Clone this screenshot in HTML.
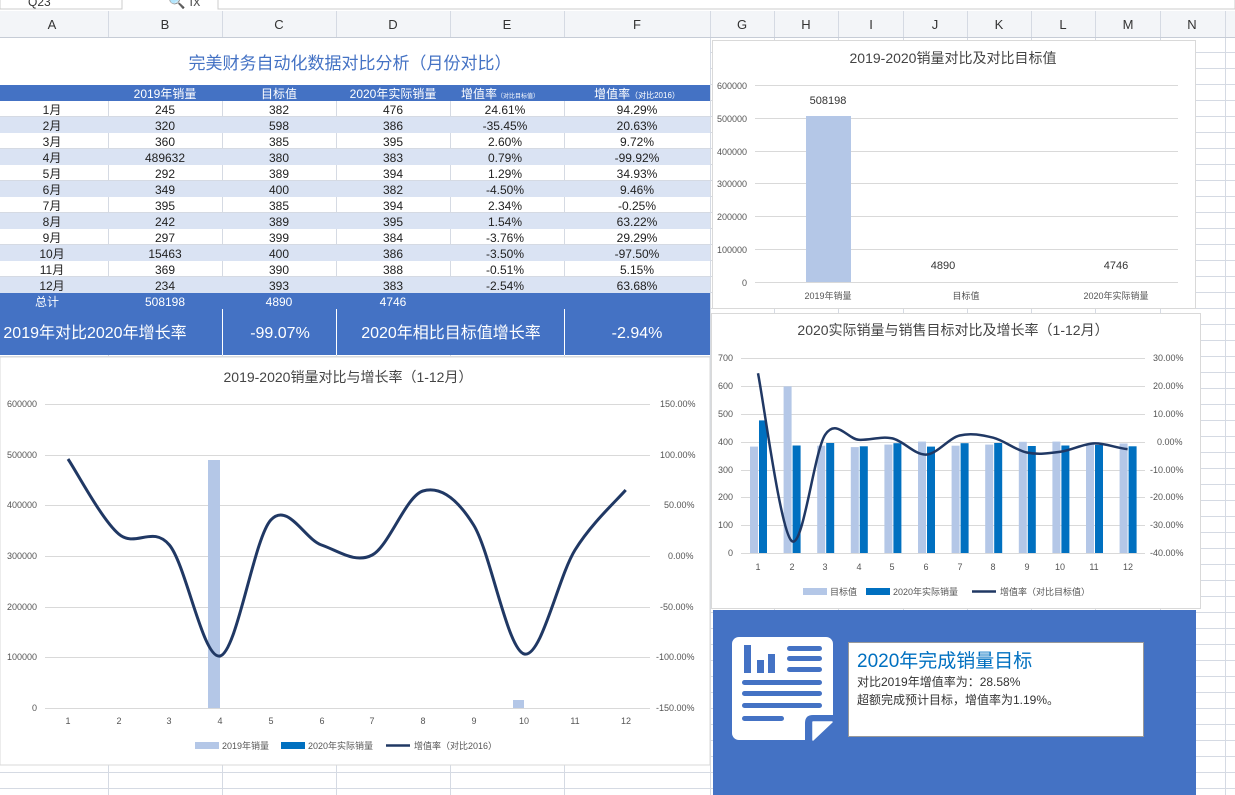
<!DOCTYPE html>
<html><head><meta charset="utf-8">
<style>
*{margin:0;padding:0;box-sizing:border-box}
body{width:1235px;height:795px;overflow:hidden;background:#fff;font-family:"Liberation Sans","Noto Sans CJK SC",sans-serif;position:relative}
svg text{font-family:"Liberation Sans","Noto Sans CJK SC",sans-serif}
</style></head><body>
<svg width="1235" height="795" viewBox="0 0 1235 795" xmlns="http://www.w3.org/2000/svg" style="position:absolute;left:0;top:0">
<defs>
<pattern id="rows" x="0" y="5" width="10" height="16" patternUnits="userSpaceOnUse"><rect x="0" y="15" width="10" height="1" fill="#d5dae3"/></pattern>
</defs>
<rect x="0" y="0" width="1235" height="11" fill="#fff"/>
<rect x="0" y="-2" width="122" height="11" fill="#fff" stroke="#ccc"/>
<text x="28" y="6" font-size="12" fill="#333">Q23</text>
<text x="168" y="6" font-size="14" fill="#555">🔍 fx</text>
<rect x="218" y="-2" width="1017" height="11" fill="#fff" stroke="#ccc"/>
<rect x="0" y="11" width="1235" height="26" fill="#f3f5f8"/>
<line x1="0" y1="37.5" x2="1235" y2="37.5" stroke="#c6ccd6"/>
<g font-size="13" fill="#333" text-anchor="middle">
<text x="52" y="29">A</text><text x="165" y="29">B</text><text x="279" y="29">C</text><text x="393" y="29">D</text><text x="507" y="29">E</text><text x="637" y="29">F</text><text x="742" y="29">G</text><text x="806" y="29">H</text><text x="871" y="29">I</text><text x="935" y="29">J</text><text x="999" y="29">K</text><text x="1063" y="29">L</text><text x="1128" y="29">M</text><text x="1192" y="29">N</text>
</g>
<g stroke="#d5dae3">
<line x1="108.5" y1="11" x2="108.5" y2="37"/><line x1="222.5" y1="11" x2="222.5" y2="37"/><line x1="336.5" y1="11" x2="336.5" y2="37"/><line x1="450.5" y1="11" x2="450.5" y2="37"/><line x1="564.5" y1="11" x2="564.5" y2="37"/><line x1="710.5" y1="11" x2="710.5" y2="37"/><line x1="774.5" y1="11" x2="774.5" y2="37"/><line x1="838.5" y1="11" x2="838.5" y2="37"/><line x1="903.5" y1="11" x2="903.5" y2="37"/><line x1="967.5" y1="11" x2="967.5" y2="37"/><line x1="1031.5" y1="11" x2="1031.5" y2="37"/><line x1="1095.5" y1="11" x2="1095.5" y2="37"/><line x1="1160.5" y1="11" x2="1160.5" y2="37"/><line x1="1225.5" y1="11" x2="1225.5" y2="37"/>
</g>
<rect x="0" y="38" width="1235" height="757" fill="url(#rows)"/>
<g stroke="#d5dae3">
<line x1="108.5" y1="38" x2="108.5" y2="795"/><line x1="222.5" y1="38" x2="222.5" y2="795"/><line x1="336.5" y1="38" x2="336.5" y2="795"/><line x1="450.5" y1="38" x2="450.5" y2="795"/><line x1="564.5" y1="38" x2="564.5" y2="795"/><line x1="710.5" y1="38" x2="710.5" y2="795"/><line x1="774.5" y1="38" x2="774.5" y2="795"/><line x1="838.5" y1="38" x2="838.5" y2="795"/><line x1="903.5" y1="38" x2="903.5" y2="795"/><line x1="967.5" y1="38" x2="967.5" y2="795"/><line x1="1031.5" y1="38" x2="1031.5" y2="795"/><line x1="1095.5" y1="38" x2="1095.5" y2="795"/><line x1="1160.5" y1="38" x2="1160.5" y2="795"/><line x1="1225.5" y1="38" x2="1225.5" y2="795"/>
</g>
<rect x="0" y="38" width="710" height="47" fill="#fff"/>
<text x="350" y="69" font-size="17" fill="#4472c4" text-anchor="middle">完美财务自动化数据对比分析（月份对比）</text>
<rect x="0" y="85" width="710" height="16" fill="#4472c4"/>
<g font-size="12" fill="#fff" text-anchor="middle">
<text x="165" y="98">2019年销量</text><text x="279" y="98">目标值</text><text x="393" y="98">2020年实际销量</text>
<text x="500" y="98">增值率<tspan font-size="6">（对比目标值）</tspan></text>
<text x="637" y="98">增值率<tspan font-size="8">（对比2016）</tspan></text>
</g>
<g fill="#dae3f3">
<rect x="0" y="117" width="710" height="16"/><rect x="0" y="149" width="710" height="16"/><rect x="0" y="181" width="710" height="16"/><rect x="0" y="213" width="710" height="16"/><rect x="0" y="245" width="710" height="16"/><rect x="0" y="277" width="710" height="16"/>
</g>
<g font-size="12" fill="#222" text-anchor="middle">
<text x="52" y="114">1月</text><text x="165" y="114">245</text><text x="279" y="114">382</text><text x="393" y="114">476</text><text x="505" y="114">24.61%</text><text x="637" y="114">94.29%</text>
<text x="52" y="130">2月</text><text x="165" y="130">320</text><text x="279" y="130">598</text><text x="393" y="130">386</text><text x="505" y="130">-35.45%</text><text x="637" y="130">20.63%</text>
<text x="52" y="146">3月</text><text x="165" y="146">360</text><text x="279" y="146">385</text><text x="393" y="146">395</text><text x="505" y="146">2.60%</text><text x="637" y="146">9.72%</text>
<text x="52" y="162">4月</text><text x="165" y="162">489632</text><text x="279" y="162">380</text><text x="393" y="162">383</text><text x="505" y="162">0.79%</text><text x="637" y="162">-99.92%</text>
<text x="52" y="178">5月</text><text x="165" y="178">292</text><text x="279" y="178">389</text><text x="393" y="178">394</text><text x="505" y="178">1.29%</text><text x="637" y="178">34.93%</text>
<text x="52" y="194">6月</text><text x="165" y="194">349</text><text x="279" y="194">400</text><text x="393" y="194">382</text><text x="505" y="194">-4.50%</text><text x="637" y="194">9.46%</text>
<text x="52" y="210">7月</text><text x="165" y="210">395</text><text x="279" y="210">385</text><text x="393" y="210">394</text><text x="505" y="210">2.34%</text><text x="637" y="210">-0.25%</text>
<text x="52" y="226">8月</text><text x="165" y="226">242</text><text x="279" y="226">389</text><text x="393" y="226">395</text><text x="505" y="226">1.54%</text><text x="637" y="226">63.22%</text>
<text x="52" y="242">9月</text><text x="165" y="242">297</text><text x="279" y="242">399</text><text x="393" y="242">384</text><text x="505" y="242">-3.76%</text><text x="637" y="242">29.29%</text>
<text x="52" y="258">10月</text><text x="165" y="258">15463</text><text x="279" y="258">400</text><text x="393" y="258">386</text><text x="505" y="258">-3.50%</text><text x="637" y="258">-97.50%</text>
<text x="52" y="274">11月</text><text x="165" y="274">369</text><text x="279" y="274">390</text><text x="393" y="274">388</text><text x="505" y="274">-0.51%</text><text x="637" y="274">5.15%</text>
<text x="52" y="290">12月</text><text x="165" y="290">234</text><text x="279" y="290">393</text><text x="393" y="290">383</text><text x="505" y="290">-2.54%</text><text x="637" y="290">63.68%</text>
</g>
<rect x="0" y="293" width="710" height="16" fill="#4472c4"/>
<g font-size="12" fill="#fff" text-anchor="middle">
<text x="47" y="306">总计</text><text x="165" y="306">508198</text><text x="279" y="306">4890</text><text x="393" y="306">4746</text>
</g>
<rect x="0" y="309" width="710" height="46" fill="#4472c4"/>
<g stroke="#fff"><line x1="222.5" y1="309" x2="222.5" y2="355"/><line x1="336.5" y1="309" x2="336.5" y2="355"/><line x1="564.5" y1="309" x2="564.5" y2="355"/></g>
<g font-size="16" fill="#fff" text-anchor="middle">
<text x="95" y="338">2019年对比2020年增长率</text><text x="280" y="338">-99.07%</text><text x="451" y="338">2020年相比目标值增长率</text><text x="637" y="338">-2.94%</text>
</g>
<rect x="0" y="357" width="710" height="408" fill="#fff" stroke="#d9d9d9"/>
<text x="348" y="382" font-size="14" fill="#444" text-anchor="middle">2019-2020销量对比与增长率（1-12月）</text>
<g stroke="#d9d9d9">
<line x1="45" y1="404.5" x2="650" y2="404.5"/><line x1="45" y1="455.5" x2="650" y2="455.5"/><line x1="45" y1="505.5" x2="650" y2="505.5"/><line x1="45" y1="556.5" x2="650" y2="556.5"/><line x1="45" y1="607.5" x2="650" y2="607.5"/><line x1="45" y1="657.5" x2="650" y2="657.5"/><line x1="45" y1="708.5" x2="650" y2="708.5"/>
</g>
<g font-size="9" fill="#555" text-anchor="end">
<text x="37" y="407">600000</text><text x="37" y="458">500000</text><text x="37" y="508">400000</text><text x="37" y="559">300000</text><text x="37" y="610">200000</text><text x="37" y="660">100000</text><text x="37" y="711">0</text>
</g>
<g font-size="9" fill="#555">
<text x="660" y="407">150.00%</text><text x="660" y="458">100.00%</text><text x="664" y="508">50.00%</text><text x="668" y="559">0.00%</text><text x="660" y="610">-50.00%</text><text x="656" y="660">-100.00%</text><text x="656" y="711">-150.00%</text>
</g>
<g font-size="9" fill="#555" text-anchor="middle">
<text x="68" y="724">1</text><text x="119" y="724">2</text><text x="169" y="724">3</text><text x="220" y="724">4</text><text x="271" y="724">5</text><text x="322" y="724">6</text><text x="372" y="724">7</text><text x="423" y="724">8</text><text x="474" y="724">9</text><text x="524" y="724">10</text><text x="575" y="724">11</text><text x="626" y="724">12</text>
</g>
<rect x="208" y="460" width="12" height="248" fill="#b4c7e7"/>
<rect x="513" y="700" width="11" height="8" fill="#b4c7e7"/>
<path d="M68,459 C76.5,471.5 101.8,519.7 118.7,534 C135.6,548.3 152.5,524.7 169.4,545 C186.3,565.3 203.2,660.2 220.1,656 C237,651.8 253.9,538.5 270.8,520 C287.7,501.5 304.6,539.2 321.5,545 C338.4,550.8 355.3,564 372.2,555 C389.1,546 406,496 422.9,491 C439.8,486 456.7,497.8 473.6,525 C490.5,552.2 507.4,649.8 524.3,654 C541.2,658.2 558.1,577.3 575,550 C591.9,522.7 617.2,500 625.7,490" fill="none" stroke="#203864" stroke-width="3"/>
<g font-size="9" fill="#555">
<rect x="195" y="742" width="24" height="7" fill="#b4c7e7"/><text x="222" y="749">2019年销量</text>
<rect x="281" y="742" width="24" height="7" fill="#0070c0"/><text x="308" y="749">2020年实际销量</text>
<line x1="386" y1="745.5" x2="410" y2="745.5" stroke="#203864" stroke-width="2.5"/><text x="414" y="749">增值率（对比2016）</text>
</g>
<rect x="712.5" y="40.5" width="483" height="268" fill="#fff" stroke="#d9d9d9"/>
<text x="953" y="63" font-size="14" fill="#444" text-anchor="middle">2019-2020销量对比及对比目标值</text>
<g stroke="#d9d9d9">
<line x1="755" y1="85.5" x2="1178" y2="85.5"/><line x1="755" y1="118.5" x2="1178" y2="118.5"/><line x1="755" y1="151.5" x2="1178" y2="151.5"/><line x1="755" y1="183.5" x2="1178" y2="183.5"/><line x1="755" y1="216.5" x2="1178" y2="216.5"/><line x1="755" y1="249.5" x2="1178" y2="249.5"/><line x1="755" y1="282.5" x2="1178" y2="282.5"/>
</g>
<g font-size="9" fill="#555" text-anchor="end">
<text x="747" y="89">600000</text><text x="747" y="122">500000</text><text x="747" y="155">400000</text><text x="747" y="187">300000</text><text x="747" y="220">200000</text><text x="747" y="253">100000</text><text x="747" y="286">0</text>
</g>
<rect x="806" y="116" width="45" height="166" fill="#b4c7e7"/>
<g font-size="11" fill="#333" text-anchor="middle">
<text x="828" y="104">508198</text><text x="943" y="269">4890</text><text x="1116" y="269">4746</text>
</g>
<g font-size="9" fill="#555" text-anchor="middle">
<text x="828" y="299">2019年销量</text><text x="966" y="299">目标值</text><text x="1116" y="299">2020年实际销量</text>
</g>
<rect x="711.5" y="313.5" width="489" height="295" fill="#fff" stroke="#d9d9d9"/>
<text x="953" y="335" font-size="14" fill="#444" text-anchor="middle">2020实际销量与销售目标对比及增长率（1-12月）</text>
<g stroke="#d9d9d9">
<line x1="741" y1="358.5" x2="1145" y2="358.5"/><line x1="741" y1="386.5" x2="1145" y2="386.5"/><line x1="741" y1="414.5" x2="1145" y2="414.5"/><line x1="741" y1="442.5" x2="1145" y2="442.5"/><line x1="741" y1="470.5" x2="1145" y2="470.5"/><line x1="741" y1="497.5" x2="1145" y2="497.5"/><line x1="741" y1="525.5" x2="1145" y2="525.5"/><line x1="741" y1="553.5" x2="1145" y2="553.5"/>
</g>
<g font-size="9" fill="#555">
<text x="718" y="361">700</text><text x="718" y="389">600</text><text x="718" y="417">500</text><text x="718" y="445">400</text><text x="718" y="473">300</text><text x="718" y="500">200</text><text x="718" y="528">100</text><text x="728" y="556">0</text>
<text x="1153" y="361">30.00%</text><text x="1153" y="389">20.00%</text><text x="1153" y="417">10.00%</text><text x="1157" y="445">0.00%</text><text x="1150" y="473">-10.00%</text><text x="1150" y="500">-20.00%</text><text x="1150" y="528">-30.00%</text><text x="1150" y="556">-40.00%</text>
</g>
<g fill="#b4c7e7">
<rect x="750" y="446.6" width="8" height="106.4"/><rect x="783.6" y="386.4" width="8" height="166.6"/><rect x="817.2" y="445.7" width="8" height="107.3"/><rect x="850.8" y="447.1" width="8" height="105.9"/><rect x="884.4" y="444.6" width="8" height="108.4"/><rect x="918" y="441.6" width="8" height="111.4"/><rect x="951.6" y="445.7" width="8" height="107.3"/><rect x="985.2" y="444.6" width="8" height="108.4"/><rect x="1018.8" y="441.8" width="8" height="111.2"/><rect x="1052.4" y="441.6" width="8" height="111.4"/><rect x="1086" y="444.3" width="8" height="108.7"/><rect x="1119.6" y="443.5" width="8" height="109.5"/>
</g>
<g fill="#0070c0">
<rect x="759" y="420.4" width="8" height="132.6"/><rect x="792.6" y="445.5" width="8" height="107.5"/><rect x="826.2" y="443" width="8" height="110"/><rect x="859.8" y="446.3" width="8" height="106.7"/><rect x="893.4" y="443.2" width="8" height="109.8"/><rect x="927" y="446.6" width="8" height="106.4"/><rect x="960.6" y="443.2" width="8" height="109.8"/><rect x="994.2" y="443" width="8" height="110"/><rect x="1027.8" y="446" width="8" height="107"/><rect x="1061.4" y="445.5" width="8" height="107.5"/><rect x="1095" y="444.9" width="8" height="108.1"/><rect x="1128.6" y="446.3" width="8" height="106.7"/>
</g>
<path d="M758,373.3 C763.6,401.2 780.4,530.7 791.6,540.9 C802.8,551.1 814,451.5 825.2,434.7 C836.4,417.9 847.6,439.2 858.8,439.8 C870,440.4 881.2,435.9 892.4,438.4 C903.6,440.9 914.8,455.1 926,454.6 C937.2,454.1 948.4,438.3 959.6,435.5 C970.8,432.7 982,434.9 993.2,437.7 C1004.4,440.5 1015.6,450.2 1026.8,452.5 C1038,454.9 1049.2,453.3 1060.4,451.8 C1071.6,450.3 1082.8,443.9 1094,443.4 C1105.2,442.9 1116.4,448.2 1127.6,449.1" fill="none" stroke="#203864" stroke-width="2.5"/>
<g font-size="9" fill="#555" text-anchor="middle">
<text x="758" y="570">1</text><text x="792" y="570">2</text><text x="825" y="570">3</text><text x="859" y="570">4</text><text x="892" y="570">5</text><text x="926" y="570">6</text><text x="960" y="570">7</text><text x="993" y="570">8</text><text x="1027" y="570">9</text><text x="1060" y="570">10</text><text x="1094" y="570">11</text><text x="1128" y="570">12</text>
</g>
<g font-size="9" fill="#555">
<rect x="803" y="588" width="24" height="7" fill="#b4c7e7"/><text x="830" y="595">目标值</text>
<rect x="866" y="588" width="24" height="7" fill="#0070c0"/><text x="893" y="595">2020年实际销量</text>
<line x1="972" y1="591.5" x2="996" y2="591.5" stroke="#203864" stroke-width="2.5"/><text x="1000" y="595">增值率（对比目标值）</text>
</g>
<rect x="713" y="610" width="483" height="185" fill="#4472c4"/>
<rect x="732" y="637" width="101" height="103" rx="7" fill="#fff"/>
<path d="M805,742 L805,723 Q805,715 813,715 L835,715 L835,742 Z" fill="#4472c4"/>
<path d="M813,722 L832,722 L813,740 Z" fill="#fff" stroke="#fff" stroke-width="1.5" stroke-linejoin="round"/>
<g fill="#4472c4">
<rect x="744" y="645" width="7" height="28"/><rect x="757" y="660" width="7" height="13"/><rect x="768" y="654" width="7" height="19"/>
<rect x="787" y="646" width="35" height="5" rx="2.5"/><rect x="787" y="656" width="35" height="5" rx="2.5"/><rect x="787" y="667" width="35" height="5" rx="2.5"/>
<rect x="742" y="680" width="80" height="5" rx="2.5"/><rect x="742" y="691" width="80" height="5" rx="2.5"/><rect x="742" y="703" width="80" height="5" rx="2.5"/><rect x="742" y="716" width="42" height="5" rx="2.5"/>
</g>
<rect x="848.5" y="642.5" width="295" height="94" fill="#fff" stroke="#999"/>
<text x="857" y="667" font-size="19" fill="#0070c0">2020年完成销量目标</text>
<text x="857" y="686" font-size="12" fill="#333">对比2019年增值率为：28.58%</text>
<text x="857" y="704" font-size="12" fill="#333">超额完成预计目标，增值率为1.19%。</text>
</svg>
</body></html>
